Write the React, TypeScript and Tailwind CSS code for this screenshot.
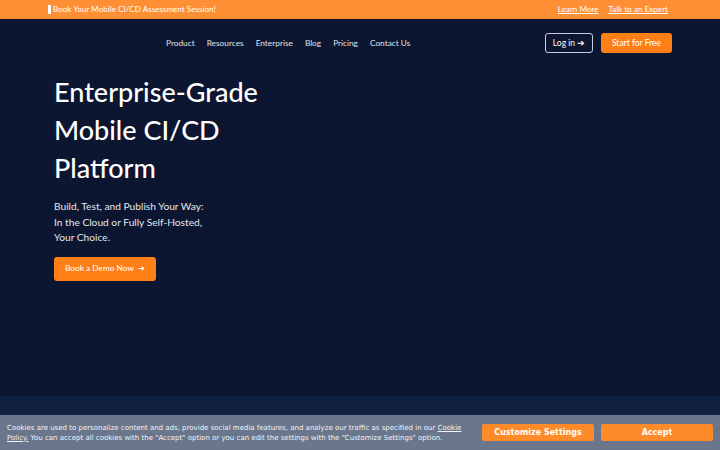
import React from "react";

const navLinks = ["Product", "Resources", "Enterprise", "Blog", "Pricing", "Contact Us"];

const App: React.FC = () => {
  return (
    <div className="relative w-[720px] h-[450px] overflow-hidden bg-[#0d1630] font-['Lato',sans-serif]">
      {/* announcement bar */}
      <div className="h-[19px] bg-[#ff8f35] flex items-center justify-between pl-[48px] pr-[52px] text-[8.1px] text-white">
        <div className="flex items-center">
          <span className="inline-block w-[3px] h-[9px] bg-white mr-[2px]"></span>
          <span>Book Your Mobile CI/CD Assessment Session!</span>
        </div>
        <div className="flex gap-[10px] underline">
          <span>Learn More</span>
          <span>Talk to an Expert</span>
        </div>
      </div>

      {/* nav */}
      <div className="h-[48px] flex items-center pr-[48px]">
        <div className="flex gap-[12px] ml-[166px] text-[8.3px] text-[#dfe3ec]">
          {navLinks.map((l) => (
            <span key={l}>{l}</span>
          ))}
        </div>
        <div className="ml-auto flex gap-[8px]">
          <button className="h-[20px] w-[48px] rounded-[3px] border border-[#c7cde0] text-white text-[8.5px]">
            Log in ➔
          </button>
          <button className="h-[20px] w-[71px] rounded-[3px] bg-[#ff7f17] text-white text-[8.5px]">
            Start for Free
          </button>
        </div>
      </div>

      {/* hero */}
      <div className="pl-[54px] pt-[6px]">
        <h1 className="text-[27px] leading-[38px] text-white font-medium">
          Enterprise-Grade
          <br />
          Mobile CI/CD
          <br />
          Platform
        </h1>
        <p className="mt-[12px] text-[10.2px] leading-[15.5px] text-[#e3e6ee]">
          Build, Test, and Publish Your Way:
          <br />
          In the Cloud or Fully Self-Hosted,
          <br />
          Your Choice.
        </p>
        <button className="mt-[11px] h-[24px] w-[102px] rounded-[3px] bg-[#ff7f17] text-white text-[8.3px]">
          Book a Demo Now&nbsp;&nbsp;➔
        </button>
      </div>

      <div className="absolute left-0 right-0 top-[396px] h-[19px] bg-[#10203f]"></div>

      {/* cookie bar */}
      <div className="absolute left-0 right-0 bottom-0 h-[35px] bg-[#6a768b] flex items-center pl-[7px] pr-[7px] font-['DejaVu_Sans',sans-serif]">
        <div className="w-[462px] text-[7px] leading-[10px] text-[#f3f4f7]">
          <div>
            Cookies are used to personalize content and ads, provide social media features, and analyze our traffic as specified in our <u>Cookie</u>
          </div>
          <div>
            <u>Policy.</u> You can accept all cookies with the "Accept" option or you can edit the settings with the "Customize Settings" option.
          </div>
        </div>
        <div className="ml-auto flex gap-[7px]">
          <button className="h-[17px] w-[112px] rounded-[2px] bg-[#ff8a2a] text-white text-[8px] font-bold">
            Customize Settings
          </button>
          <button className="h-[17px] w-[112px] rounded-[2px] bg-[#ff8a2a] text-white text-[8px] font-bold">
            Accept
          </button>
        </div>
      </div>
    </div>
  );
};

export default App;
